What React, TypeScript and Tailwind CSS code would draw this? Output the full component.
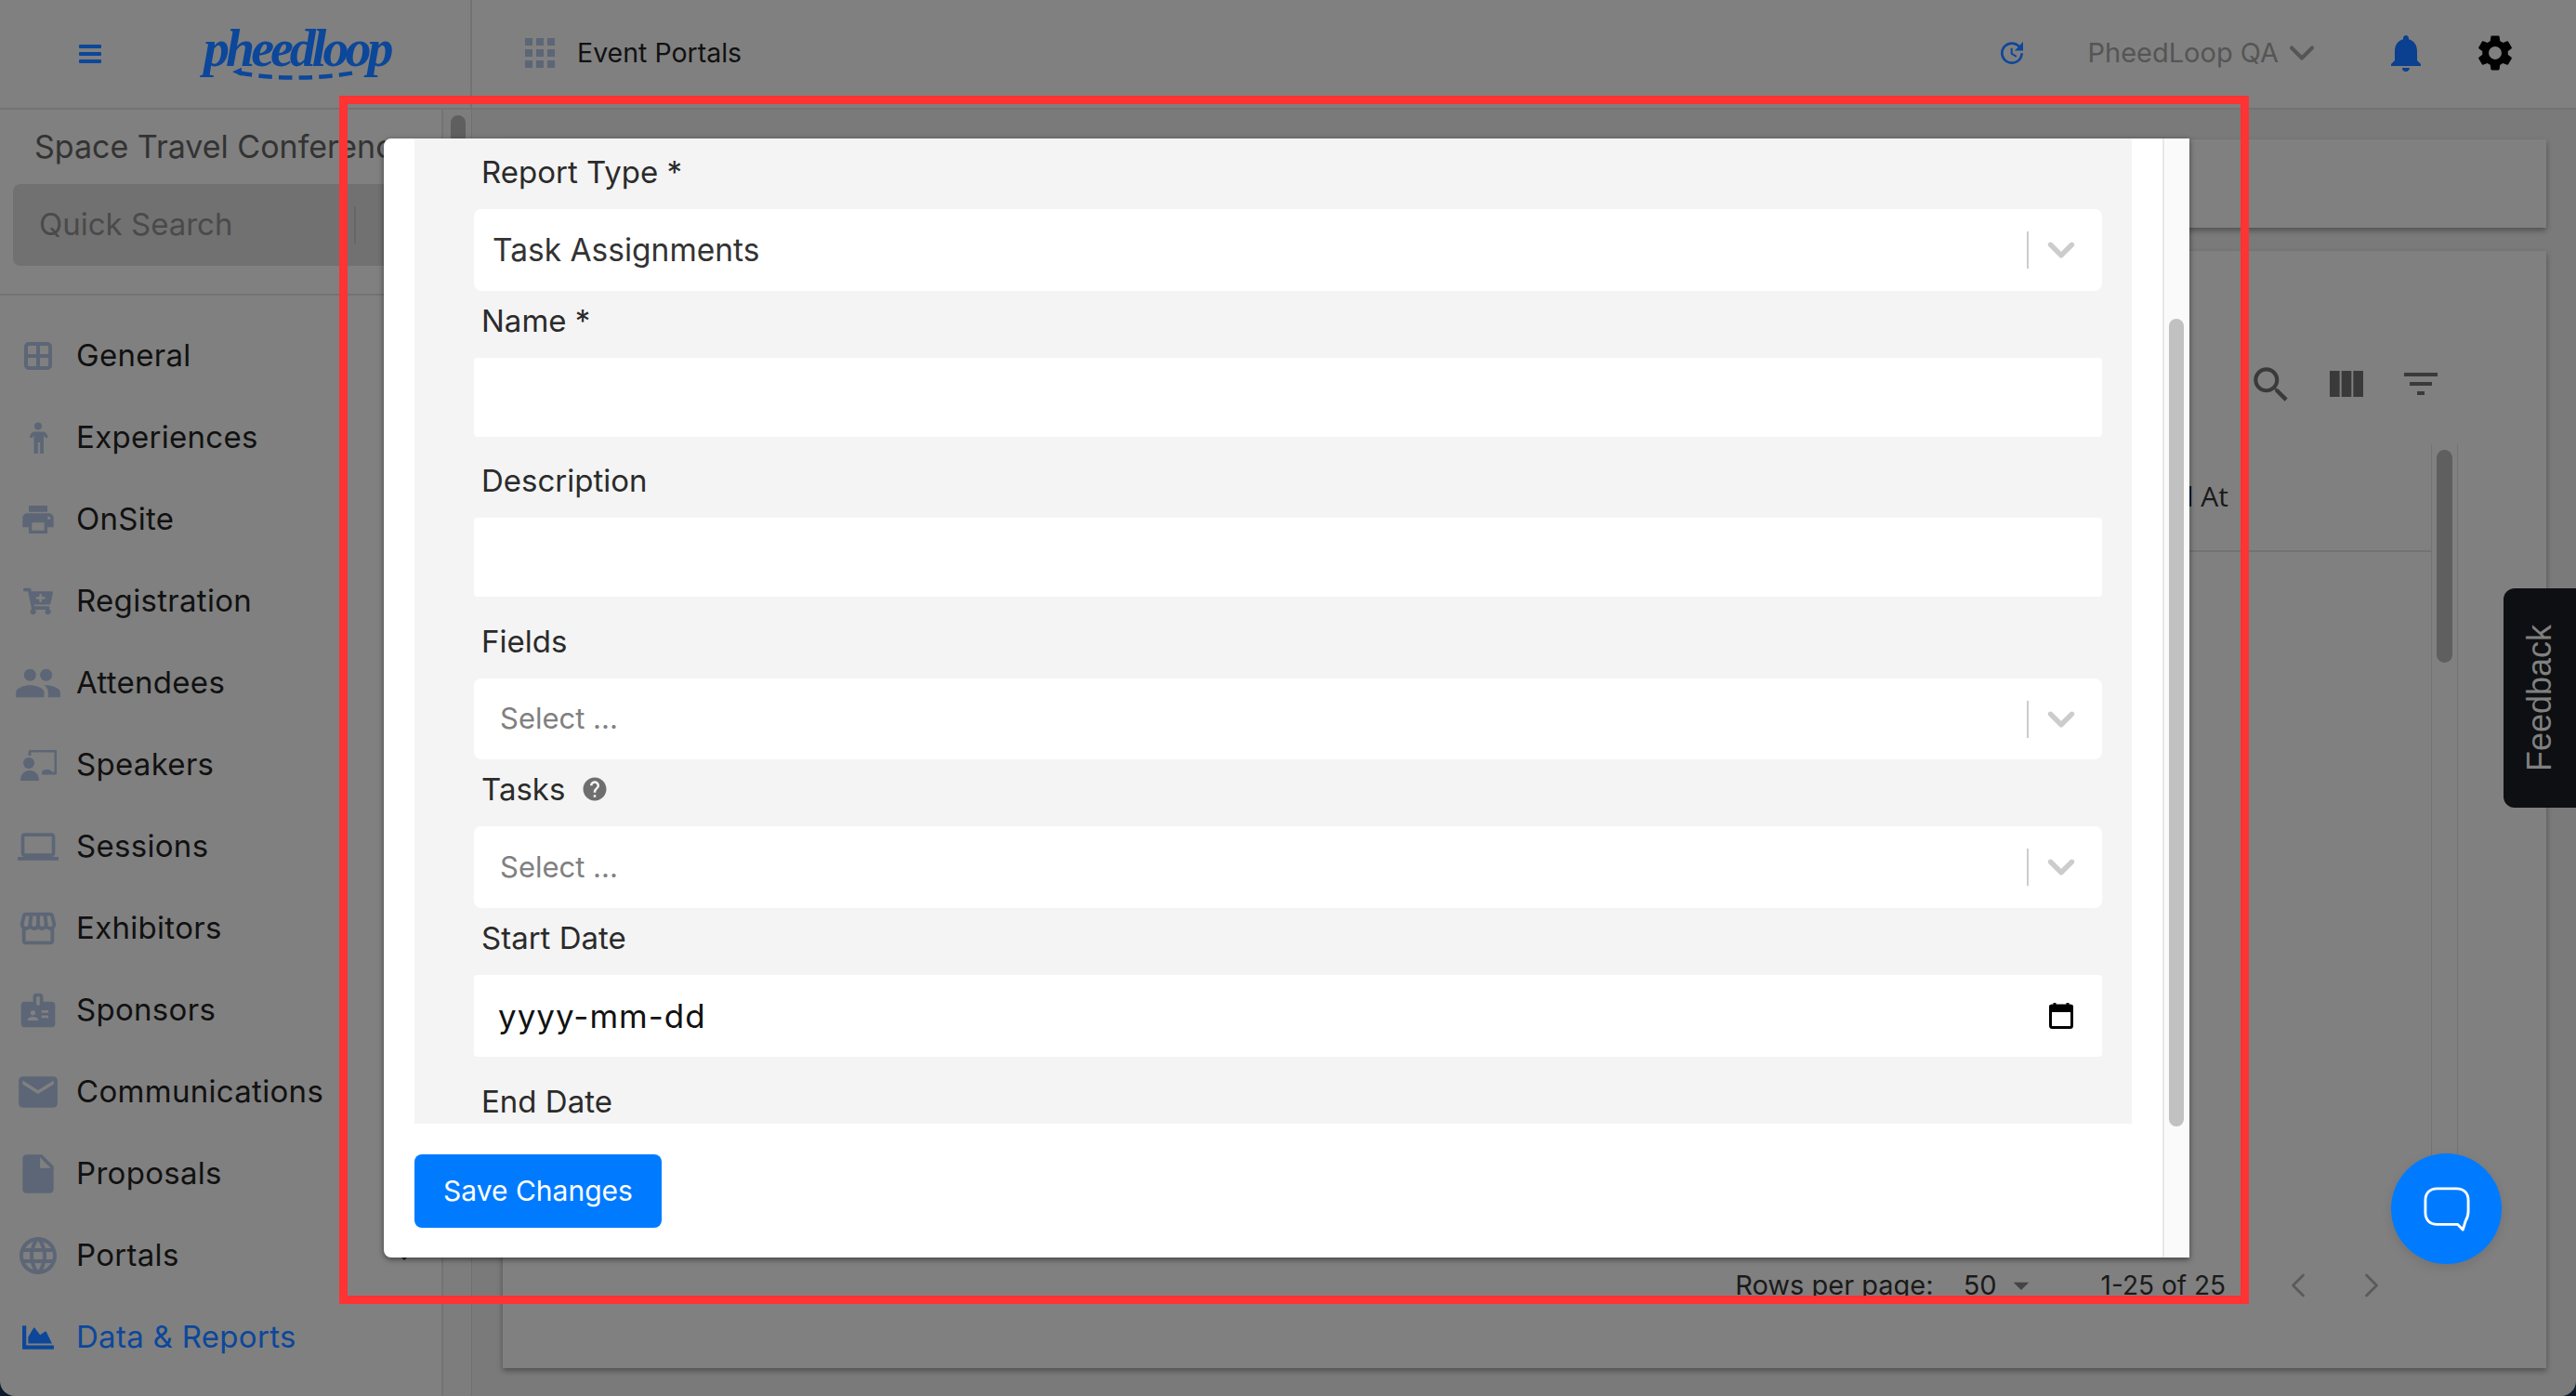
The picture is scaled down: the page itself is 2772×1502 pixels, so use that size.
import React from 'react';
import {
  MdPrint, MdPeople, MdLaptop, MdOutlineStorefront, MdBadge,
  MdEmail, MdInsertDriveFile, MdLanguage, MdSearch, MdViewColumn, MdFilterList, MdSettings,
  MdNotifications, MdUpdate, MdHelp, MdArrowDropDown,
} from 'react-icons/md';
import { FaChartArea, FaCartPlus } from 'react-icons/fa';
import { ChevronLeft, ChevronRight, ChevronDown } from 'lucide-react';

const sans = 'font-["Inter","Liberation_Sans",sans-serif]';

// --- sidebar icons that the packages don't have ---
const GridIcon = () => (
  <svg width="30" height="30" viewBox="0 0 30 30" fill="none" stroke="currentColor" strokeWidth="4">
    <rect x="2" y="2" width="26" height="26" rx="3" />
    <path d="M15 2v26M2 15h26" />
  </svg>
);

const PersonIcon = () => (
  <svg width="22" height="34" viewBox="0 0 22 34" fill="currentColor">
    <circle cx="11" cy="4.5" r="4" />
    <path d="M5.5 10.5h11c1.5 0 2.6.8 3.4 2l2 3.600-2.600 1.500-2.300-3v19.400h-3.800v-12h-2.400v12H6.500V14.600l-2.300 3-2.600-1.500 2-3.600c.8-1.200 1.900-2 3.400-2z" />
  </svg>
);

const SpeakerIcon = () => (
  <svg width="40" height="33" viewBox="0 0 40 33" fill="currentColor">
    <path d="M11 6V3a2 2 0 0 1 2-2h25a1 1 0 0 1 1 1v22a1 1 0 0 1-1 1H24" fill="none" stroke="currentColor" strokeWidth="3" />
    <circle cx="10" cy="14" r="6" />
    <path d="M1 33c0-7 4-11 10-11s10 4 10 11z" />
    <path d="M24 25c0-3 2-4 4-4h3c2 0 4 1 4 4z" />
  </svg>
);

const CalendarIcon = () => (
  <svg width="26" height="28" viewBox="0 0 26 28" fill="none">
    <path d="M6 0v4M20 0v4" stroke="#000" strokeWidth="3" />
    <rect x="0" y="2" width="26" height="8" rx="2" fill="#000" />
    <rect x="1.500" y="3" width="23" height="23.500" rx="2" stroke="#000" strokeWidth="3" />
  </svg>
);

const navItems = [
  { label: 'General', icon: <GridIcon /> },
  { label: 'Experiences', icon: <PersonIcon /> },
  { label: 'OnSite', icon: <MdPrint size={40} /> },
  { label: 'Registration', icon: <FaCartPlus size={32} /> },
  { label: 'Attendees', icon: <MdPeople size={52} /> },
  { label: 'Speakers', icon: <SpeakerIcon /> },
  { label: 'Sessions', icon: <MdLaptop size={44} /> },
  { label: 'Exhibitors', icon: <MdOutlineStorefront size={46} /> },
  { label: 'Sponsors', icon: <MdBadge size={44} /> },
  { label: 'Communications', icon: <MdEmail size={50} /> },
  { label: 'Proposals', icon: <MdInsertDriveFile size={50} /> },
  { label: 'Portals', icon: <MdLanguage size={48} /> },
];

const Sidebar = () => (
  <aside className="w-[477px] shrink-0 flex flex-col bg-[#808080] border-r-2 border-[#737373]">
    <div className="h-[200px] shrink-0 border-b-2 border-[#737373] px-[14px]">
      <div className="h-[80px] pb-[2px] pl-[23px] flex items-center text-[34px] text-[#333] whitespace-nowrap overflow-hidden">
        Space Travel Conference
      </div>
      <div className="h-[88px] rounded-lg bg-[#717171] flex items-center pl-[28px] text-[33px] text-[#4a4a4a]">
        <span className="w-[339px]">Quick Search</span>
        <div className="w-[2px] h-[40px] bg-[#666]" />
      </div>
    </div>
    <nav className="pt-[21px] flex flex-col">
      {navItems.map((item) => (
        <div key={item.label} className="h-[88px] flex items-center text-[33px] tracking-[0.3px] text-[#111]">
          <span className="w-[82px] shrink-0 flex justify-center text-[#5c6676]">{item.icon}</span>
          {item.label}
          {item.label === 'Portals' && <MdArrowDropDown size={40} className="ml-auto mr-[20px] text-[#222]" />}
        </div>
      ))}
      <div className="h-[88px] flex items-center text-[33px] tracking-[0.3px] text-[#0c479a]">
        <span className="w-[82px] shrink-0 flex justify-center"><FaChartArea size={34} /></span>
        Data &amp; Reports
      </div>
    </nav>
  </aside>
);

const Header = () => (
  <header className="h-[118px] shrink-0 flex items-center border-b-2 border-[#737373] bg-[#808080]">
    <div className="w-[508px] h-full shrink-0 flex items-center border-r-2 border-[#737373] pl-[85px]">
      <svg width="24" height="20" viewBox="0 0 24 20" fill="#0c479a">
        <rect width="24" height="4" rx="1" />
        <rect y="8" width="24" height="4" rx="1" />
        <rect y="16" width="24" height="4" rx="1" />
      </svg>
      <div className="relative ml-[110px] w-[200px] h-[68px]">
        <span className='block whitespace-nowrap font-["Liberation_Serif",serif] italic font-bold text-[56px] leading-[56px] tracking-[-4px] text-[#0c479a]'>pheedloop</span>
        <svg className="absolute left-[31px] bottom-[3px]" width="135" height="18" viewBox="0 0 150 18" fill="none" stroke="#0c479a" strokeWidth="5">
          <path d="M8 7 C 50 15, 100 15, 146 7" strokeDasharray="16 8" />
          <path d="M0 6l11-5v10z" fill="#0c479a" stroke="none" />
        </svg>
      </div>
    </div>
    <div className="flex-1 flex items-center pb-[2px] pl-[57px] pr-[64px]">
      <svg width="32" height="32" viewBox="0 0 32 32" fill="#5c6676">
        <rect width="8" height="8" /><rect x="12" width="8" height="8" /><rect x="24" width="8" height="8" />
        <rect y="12" width="8" height="8" /><rect x="12" y="12" width="8" height="8" /><rect x="24" y="12" width="8" height="8" />
        <rect y="24" width="8" height="8" /><rect x="12" y="24" width="8" height="8" /><rect x="24" y="24" width="8" height="8" />
      </svg>
      <span className="ml-[24px] text-[28.5px] text-[#111]">Event Portals</span>
      <MdUpdate size={32} className="ml-auto text-[#0c479a]" />
      <span className="ml-[65px] text-[29px] text-[#555]">PheedLoop QA</span>
      <ChevronDown size={44} strokeWidth={2.2} className="ml-[3px] text-[#555]" />
      <MdNotifications size={48} className="ml-[66px] text-[#0b3f8f]" />
      <MdSettings size={46} className="ml-[49px] text-black" />
    </div>
  </header>
);

const MainContent = () => (
  <main className="relative flex-1 min-w-0 flex flex-col gap-[25px] pt-[32px] pl-[33px] pr-[32px] bg-[#7a7a7a]">
    <div className="absolute left-[-31px] top-0 bottom-0 w-[31px] bg-[#7d7d7d] border-r border-[#707070]">
      <div className="ml-[8px] mt-[6px] w-[16px] h-[300px] rounded-full bg-[#5f5f5f]" />
    </div>
    <div className="h-[95px] bg-[#808080] shadow-[0_3px_6px_rgba(0,0,0,0.35)]" />
    <div className="h-[1202px] flex flex-col bg-[#808080] shadow-[0_3px_6px_rgba(0,0,0,0.35)]">
      <div className="h-[208px] shrink-0 pt-[119px] pr-[111px] flex justify-end items-start gap-[32px] text-[#3a3a3a]">
        <MdSearch size={50} />
        <MdViewColumn size={48} />
        <MdFilterList size={48} />
      </div>
      <div className="h-[816px] shrink-0 flex pr-[95px]">
        <div className="flex-1 min-w-0">
          <div className={`h-[116px] flex items-end justify-end pr-[218px] pb-[36px] border-b-2 border-[#737373] text-[30px] text-[#1a1a1a] font-["Open_Sans",sans-serif]`}>
            Final At
          </div>
        </div>
        <div className="w-[29px] shrink-0 border-x border-[#737373] pt-[6px] flex justify-center">
          <div className="w-[17px] h-[229px] rounded-full bg-[#5f5f5f]" />
        </div>
      </div>
      <div className="flex-1 flex items-center justify-end pr-[166px] text-[29px] text-[#1a1a1a]">
        <span>Rows per page:</span>
        <span className="ml-[32px]">50</span>
        <MdArrowDropDown size={40} className="ml-[6px] text-[#444]" />
        <span className="ml-[66px] text-[28px]">1-25 of 25</span>
        <ChevronLeft size={44} strokeWidth={1.5} className="ml-[56px] text-[#5a5a5a]" />
        <ChevronRight size={44} strokeWidth={1.5} className="ml-[35px] text-[#5a5a5a]" />
      </div>
    </div>
  </main>
);

// --- modal form pieces ---
const Label = ({ children }: { children: React.ReactNode }) => (
  <div className="h-[48px] leading-[48px] mb-[16px] ml-[8px] flex items-center text-[33px] text-[#2b2b2b]">{children}</div>
);

const Select = ({ value, placeholder, h }: { value?: string; placeholder?: string; h: string }) => (
  <div className={`${h} mb-[8px] rounded-lg bg-white flex items-center`}>
    {value ? (
      <span className="ml-[20px] text-[33.5px] text-[#333]">{value}</span>
    ) : (
      <span className="ml-[28px] text-[31px] text-[#808080]">{placeholder}</span>
    )}
    <div className="ml-auto w-[2px] h-[40px] bg-[#cccccc]" />
    <ChevronDown size={46} strokeWidth={2.8} className="ml-[12px] mr-[21px] text-[#cccccc]" />
  </div>
);

const Modal = () => (
  <div className="absolute left-[413px] top-[149px] w-[1943px] h-[1204px] flex rounded-l-lg overflow-hidden bg-white shadow-[0_2px_6px_rgba(0,0,0,0.5)]">
    <div className="flex-1 min-w-0 flex flex-col px-[33px]">
      <div className="h-[1060px] shrink-0 overflow-hidden bg-[#f4f4f4] pt-[12px] pl-[64px] pr-[32px]">
        <Label>Report Type *</Label>
        <Select value="Task Assignments" h="h-[88px]" />
        <Label>Name *</Label>
        <input className="block w-full h-[85px] mb-[23px] rounded bg-white" />
        <Label>Description</Label>
        <input className="block w-full h-[85px] mb-[24px] rounded bg-white" />
        <Label>Fields</Label>
        <Select placeholder="Select ..." h="h-[87px]" />
        <Label>
          Tasks
          <MdHelp size={30} className="ml-[17px] text-[#6e6e6e]" />
        </Label>
        <Select placeholder="Select ..." h="h-[88px]" />
        <Label>Start Date</Label>
        <div className="h-[88px] mb-[24px] rounded bg-white flex items-center justify-between pl-[26px] pr-[31px] text-[35px] text-[#111]">
          <span className="tracking-[1px]">yyyy-mm-dd</span>
          <CalendarIcon />
        </div>
        <Label>End Date</Label>
      </div>
      <button className="mt-[33px] w-[266px] h-[79px] rounded-lg bg-[#007bff] text-white text-[30px]">Save Changes</button>
    </div>
    <div className="w-[29px] shrink-0 border-l-2 border-[#e8e8e8] bg-[#fafafa] pt-[194px] pl-[5px]">
      <div className="w-[16px] h-[869px] rounded-full bg-[#c1c1c1]" />
    </div>
  </div>
);

export default function App() {
  return (
    <div className="w-[2772px] h-[1502px] bg-[#0d1a2e] overflow-hidden">
      <div className={`relative w-full h-full flex flex-col rounded-b-[16px] overflow-hidden ${sans}`}>
        <Header />
        <div className="flex-1 min-h-0 flex">
          <Sidebar />
          <div className="w-[31px] shrink-0" />
          <MainContent />
        </div>

        <Modal />

        {/* feedback tab + chat bubble */}
        <div className='absolute right-0 top-[633px] w-[78px] h-[236px] rounded-l-xl bg-[#0e0f12] flex items-center justify-center text-[36px] text-[#808080] font-["Liberation_Sans",sans-serif]'>
          <span className="[writing-mode:vertical-rl] rotate-180">Feedback</span>
        </div>
        <div className="absolute left-[2573px] top-[1241px] w-[119px] h-[119px] rounded-full bg-[#007bff] flex items-center justify-center shadow-[0_4px_12px_rgba(0,0,0,0.1)]">
          <svg width="52" height="50" viewBox="0 0 54 52" fill="none" stroke="#fff" strokeWidth="3" strokeLinejoin="round">
            <path d="M16 3h22c8 0 13 5 13 13v12c0 5-1 8-3 11l-3 10-6-6H16C8 43 3 38 3 30V16C3 8 8 3 16 3z" />
          </svg>
        </div>

        {/* red selection frame */}
        <div className="absolute left-[365px] top-[103px] w-[2055px] h-[1300px] border-[9px] border-[#ff3333] pointer-events-none" />
      </div>
    </div>
  );
}
